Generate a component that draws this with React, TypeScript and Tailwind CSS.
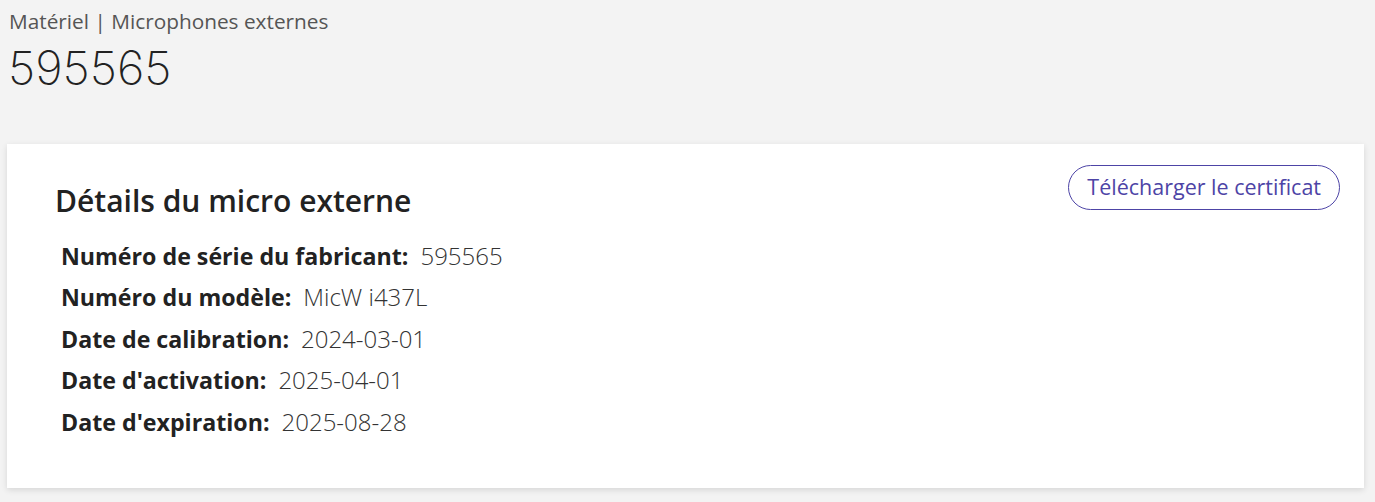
import React from "react";

const rows: { label: string; value: string }[] = [
  { label: "Numéro de série du fabricant:", value: "595565" },
  { label: "Numéro du modèle:", value: "MicW i437L" },
  { label: "Date de calibration:", value: "2024-03-01" },
  { label: "Date d'activation:", value: "2025-04-01" },
  { label: "Date d'expiration:", value: "2025-08-28" },
];

export default function App() {
  return (
    <div className="min-h-[502px] bg-[#f3f3f3] font-['Open_Sans',sans-serif] text-[#222]">
      <div className="px-[9px] pt-[6px]">
        <div className="text-[20.8px] leading-[30px] text-[#555]">Matériel | Microphones externes</div>
        <h1 className="mt-[4px] -ml-[1px] font-['Inter',sans-serif] text-[47px] leading-[56px] font-extralight text-[#222]">
          595565
        </h1>
      </div>

      <div className="ml-[7px] mr-[11px] mt-[48px] bg-white pl-[48px] pr-[24px] pt-[21px] pb-[45px] shadow-[0_2px_6px_rgba(0,0,0,0.12)]">
        <div className="flex items-start justify-between">
          <h2 className="mt-[16px] text-[30px] leading-[40px] font-semibold text-[#222]">Détails du micro externe</h2>
          <button
            type="button"
            className="h-[45px] rounded-full border border-[#4d44a6] px-[18px] text-[21.5px] text-[#4d44a6]"
          >
            Télécharger le certificat
          </button>
        </div>
        <div className="mt-[14px] pl-[6px]">
          {rows.map((r) => (
            <div key={r.label} className="flex h-[41.5px] items-center gap-[12px]">
              <span className="text-[23.2px] leading-[32px] font-bold text-[#222]">{r.label}</span>
              <span className="text-[24px] leading-[32px] font-light text-[#333]">{r.value}</span>
            </div>
          ))}
        </div>
      </div>
    </div>
  );
}
